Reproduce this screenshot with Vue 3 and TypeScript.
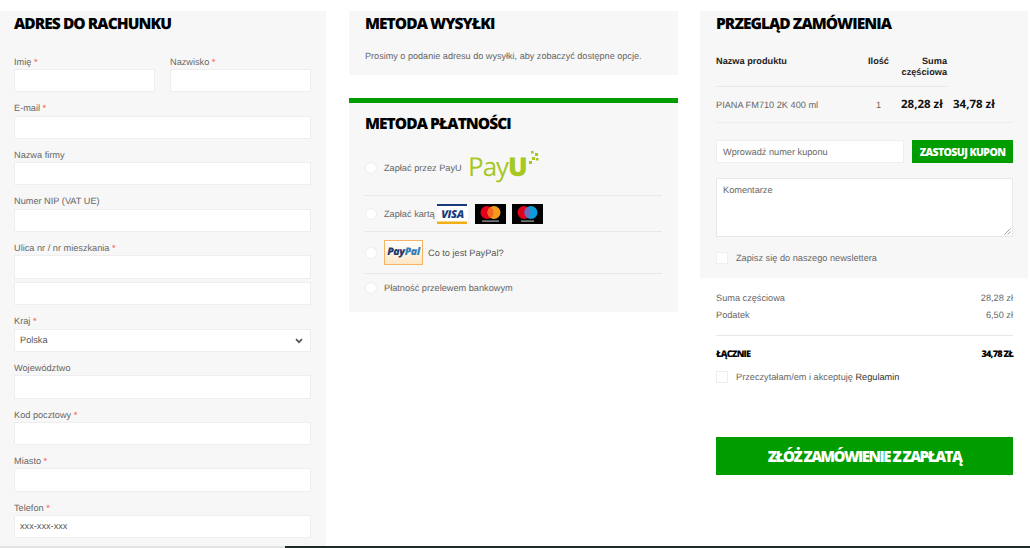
<script setup lang="ts">
interface Field {
  label: string
  required?: boolean
  half?: boolean
  value?: string
  select?: boolean
  noLabel?: boolean
}

const fields: Field[] = [
  { label: 'Imię', required: true, half: true },
  { label: 'Nazwisko', required: true, half: true },
  { label: 'E-mail', required: true },
  { label: 'Nazwa firmy' },
  { label: 'Numer NIP (VAT UE)' },
  { label: 'Ulica nr / nr mieszkania', required: true },
  { label: '', noLabel: true },
  { label: 'Kraj', required: true, value: 'Polska', select: true },
  { label: 'Województwo' },
  { label: 'Kod pocztowy', required: true },
  { label: 'Miasto', required: true },
  { label: 'Telefon', required: true, value: 'xxx-xxx-xxx' }
]
</script>

<template>
  <div class="page">
    <div class="columns">
      <section class="col col-address">
        <div class="panel panel-address">
          <h2 class="title">ADRES DO RACHUNKU</h2>
          <div class="form">
            <div
              v-for="field in fields"
              :key="field.label"
              class="field"
              :class="{ 'field--half': field.half, 'field--extra': field.noLabel }"
            >
              <label v-if="!field.noLabel" class="label">
                {{ field.label }}<span v-if="field.required" class="star"> *</span>
              </label>
              <div class="input" :class="{ 'input--select': field.select }">
                {{ field.value }}
                <svg v-if="field.select" class="chevron" width="8" height="6" viewBox="0 0 8 6" fill="none">
                  <path d="M1 1.2L4 4.2L7 1.2" stroke="#555" stroke-width="1.7" />
                </svg>
              </div>
            </div>
          </div>
        </div>
      </section>

      <section class="col col-methods">
        <div class="panel panel-shipping">
          <h2 class="title">METODA WYSYŁKI</h2>
          <p class="shipping-text">Prosimy o podanie adresu do wysyłki, aby zobaczyć dostępne opcje.</p>
        </div>

        <div class="panel panel-payment">
          <h2 class="title">METODA PŁATNOŚCI</h2>
          <div class="pay-row pay-row--payu">
            <span class="radio"></span>
            <span class="pay-label">Zapłać przez PayU</span>
            <svg class="payu" width="72" height="44" viewBox="0 -4 72 44">
              <text x="1" y="26" class="payu-light">Pay</text>
              <text x="41" y="26" class="payu-bold">U</text>
              <rect x="62" y="11" width="3" height="3" fill="#a5c822" />
              <rect x="65" y="7" width="3" height="3" fill="#a5c822" />
              <rect x="68" y="3" width="3" height="3" fill="#a5c822" />
              <rect x="64" y="1" width="2.5" height="2.5" fill="#a5c822" />
              <rect x="69" y="8" width="2.5" height="2.5" fill="#a5c822" />
            </svg>
          </div>
          <div class="pay-row pay-row--card">
            <span class="radio"></span>
            <span class="pay-label">Zapłać kartą</span>
            <div class="cards">
              <svg width="31" height="20" viewBox="0 0 31 20">
                <rect width="31" height="20" fill="#fff" />
                <rect width="30" height="2" fill="#1a3c7c" />
                <rect y="17.5" width="30" height="2.5" fill="#f2ae14" />
                <text x="15.5" y="14" class="visa-text" text-anchor="middle">VISA</text>
              </svg>
              <svg width="31" height="20" viewBox="0 0 31 20">
                <rect width="31" height="20" fill="#000" />
                <circle cx="12" cy="8.5" r="6.5" fill="#e3001b" />
                <circle cx="19" cy="8.5" r="6.5" fill="#f49b1c" />
                <path d="M15.5 3a6.5 6.5 0 0 1 0 11a6.5 6.5 0 0 1 0-11z" fill="#f2641f" />
                <rect x="7" y="16.5" width="17" height="1.2" fill="#aaa" />
              </svg>
              <svg width="31" height="20" viewBox="0 0 31 20">
                <rect width="31" height="20" fill="#000" />
                <circle cx="12" cy="8.5" r="6.5" fill="#e3001b" />
                <circle cx="19" cy="8.5" r="6.5" fill="#0a9cdc" />
                <path d="M15.5 3a6.5 6.5 0 0 1 0 11a6.5 6.5 0 0 1 0-11z" fill="#6c6bbd" />
                <rect x="9" y="16.5" width="13" height="1.2" fill="#aaa" />
              </svg>
            </div>
          </div>
          <div class="pay-row pay-row--paypal">
            <span class="radio"></span>
            <span class="paypal-badge"><span class="pp-dark">Pay</span><span class="pp-light">Pal</span></span>
            <span class="paypal-link">Co to jest PayPal?</span>
          </div>
          <div class="pay-row pay-row--bank">
            <span class="radio"></span>
            <span class="pay-label">Płatność przelewem bankowym</span>
          </div>
        </div>
      </section>

      <section class="col col-order">
        <div class="panel panel-order">
          <h2 class="title">PRZEGLĄD ZAMÓWIENIA</h2>
          <div class="order-table">
            <div class="th th-name">Nazwa produktu</div>
            <div class="th th-qty">Ilość</div>
            <div class="th th-sum">Suma częściowa</div>
            <div class="td td-name">PIANA FM710 2K 400 ml</div>
            <div class="td td-qty">1</div>
            <div class="td td-price">28,28 zł</div>
            <div class="td td-price td-total">34,78 zł</div>
          </div>
          <div class="coupon">
            <div class="input coupon-input">Wprowadź numer kuponu</div>
            <button class="coupon-btn">ZASTOSUJ KUPON</button>
          </div>
          <div class="textarea">
            Komentarze
            <svg class="grip" width="7" height="7" viewBox="0 0 7 7">
              <path d="M0.5 6.5L6.5 0.5M3.5 6.5L6.5 3.5" stroke="#888" stroke-width="0.8" />
            </svg>
          </div>
          <div class="check check--news">
            <span class="box"></span>
            <span>Zapisz się do naszego newslettera</span>
          </div>
        </div>

        <div class="summary">
          <div class="sum-row"><span>Suma częściowa</span><span>28,28 zł</span></div>
          <div class="sum-row"><span>Podatek</span><span>6,50 zł</span></div>
          <div class="sum-total"><span>ŁĄCZNIE</span><span>34,78 ZŁ</span></div>
          <div class="check">
            <span class="box"></span>
            <span>Przeczytałam/em i akceptuję <span class="terms">Regulamin</span></span>
          </div>
          <button class="submit">ZŁÓŻ ZAMÓWIENIE Z ZAPŁATĄ</button>
        </div>
      </section>
    </div>
    <div class="bottom-edge">
      <div class="edge-light"></div>
      <div class="edge-dark"></div>
    </div>
  </div>
</template>

<style>
html,
body {
  margin: 0;
  background: #fff;
  overflow: hidden;
}
</style>

<style scoped>
.page {
  width: 1030px;
  height: 548px;
  overflow: hidden;
  font-family: 'Liberation Sans', Arial, sans-serif;
  font-size: 9.2px;
  text-rendering: geometricPrecision;
  color: #666;
  display: flex;
  flex-direction: column;
}

.columns {
  flex: 1;
  min-height: 0;
  display: grid;
  grid-template-columns: 326px 329px 327px;
  column-gap: 23px;
  padding-top: 11px;
}

.col-order {
  margin-left: -1px;
}

.panel {
  background: #f7f7f7;
}

.title {
  margin: 0;
  font-family: 'Open Sans', sans-serif;
  font-weight: 800;
  font-size: 15.5px;
  line-height: 24px;
  letter-spacing: -0.95px;
  color: #000;
}

.panel-address {
  height: 535px;
  padding-left: 14px;
  box-sizing: border-box;
}

.form {
  width: 297px;
  margin-top: 10.7px;
  display: flex;
  flex-wrap: wrap;
  column-gap: 15px;
}

.field {
  width: 100%;
  height: 46.6px;
}

.field--half {
  width: 141px;
}

.field--extra {
  height: 23.3px;
  margin-top: 3.4px;
}

.label {
  display: block;
  height: 23.3px;
  box-sizing: border-box;
  padding-top: 9px;
  line-height: 14px;
}

.star {
  color: #f5604a;
}

.input {
  height: 23.3px;
  box-sizing: border-box;
  background: #fff;
  border: 1px solid #eee;
  padding: 0 5px;
  line-height: 21px;
  color: #555;
  position: relative;
}

.chevron {
  position: absolute;
  right: 7px;
  top: 8px;
}

.col-methods {
  display: flex;
  flex-direction: column;
}

.panel-shipping {
  height: 64px;
  padding: 0 16px;
}

.shipping-text {
  margin: 14px 0 0;
  line-height: 14px;
  font-size: 9.1px;
}

.panel-payment {
  margin-top: 23px;
  height: 214px;
  box-sizing: border-box;
  border-top: 5px solid #009c00;
  padding: 8px 16px 0 15px;
}

.panel-payment .title {
  height: 34px;
  margin-left: 1px;
}

.pay-row {
  display: flex;
  align-items: center;
  border-bottom: 1px solid #e8e8e8;
  box-sizing: border-box;
}

.pay-row--payu {
  height: 51px;
  padding-bottom: 5px;
}

.pay-row--card {
  height: 36px;
}

.pay-row--paypal {
  height: 42px;
}

.pay-row--bank {
  height: 27px;
  border-bottom: none;
}

.radio {
  width: 12px;
  height: 12px;
  margin-left: 1px;
  margin-right: 7px;
  border-radius: 50%;
  background: #fff;
  border: 1px solid #eee;
  box-sizing: border-box;
  flex: none;
}

.pay-label {
  white-space: nowrap;
}

.payu {
  margin-left: 5px;
  flex: none;
}

.payu-light {
  font-family: 'Open Sans', sans-serif;
  font-size: 26px;
  font-weight: 500;
  fill: #a5c822;
  letter-spacing: -1px;
}

.payu-bold {
  font-family: 'Open Sans', sans-serif;
  font-size: 26px;
  font-weight: 800;
  fill: #a5c822;
}

.cards {
  display: flex;
  gap: 6.5px;
  margin-left: 2.5px;
}

.cards svg {
  display: block;
}

.visa-text {
  font-family: 'Open Sans', sans-serif;
  font-weight: 800;
  font-style: italic;
  font-size: 11px;
  letter-spacing: -0.4px;
  fill: #1a3c7c;
}

.paypal-badge {
  width: 39px;
  height: 25px;
  box-sizing: border-box;
  border: 1px solid #f5b565;
  background: linear-gradient(#fff, #fde6c8);
  font-family: 'Open Sans', sans-serif;
  font-weight: 800;
  font-style: italic;
  font-size: 10.5px;
  letter-spacing: -0.4px;
  line-height: 23px;
  text-align: center;
  flex: none;
}

.pp-dark {
  color: #1f3b70;
}

.pp-light {
  color: #2f7fb8;
}

.paypal-link {
  margin-left: 5px;
  color: #555;
}

.panel-order {
  height: 267px;
  padding: 0 15px 0 16px;
  box-sizing: border-box;
}

.order-table {
  margin-top: 15px;
  width: 297px;
  display: grid;
  grid-template-columns: 146px 33px 52px 66px;
}

.th {
  height: 37px;
  border-bottom: 1px solid #e8e8e8;
  box-sizing: border-box;
  font-weight: bold;
  color: #222;
  line-height: 11px;
  padding-top: 6px;
}

.th-qty {
  text-align: center;
}

.th-sum {
  grid-column: 3;
  text-align: right;
  margin-left: -16px;
}

.td {
  height: 36px;
  display: flex;
  align-items: center;
  border-bottom: 1px solid #eee;
  box-sizing: border-box;
  white-space: nowrap;
}

.td-name {
  grid-column: 1;
}

.td-qty {
  justify-content: center;
}

.td-price {
  font-family: 'Open Sans', sans-serif;
  font-weight: 700;
  font-size: 11.5px;
  color: #111;
  padding-left: 6px;
}

.coupon {
  display: flex;
  justify-content: space-between;
  margin-top: 17px;
  width: 297px;
}

.coupon-input {
  width: 188px;
  height: 22.5px;
  padding: 0 6px;
  line-height: 22px;
  color: #666;
}

.coupon-btn {
  width: 101px;
  height: 23px;
  padding: 0;
  border: 0;
  background: #009c00;
  color: #fff;
  font-family: 'Open Sans', sans-serif;
  font-weight: 800;
  font-size: 10.5px;
  letter-spacing: -0.6px;
}

.textarea {
  position: relative;
  margin-top: 15px;
  width: 297px;
  height: 59px;
  background: #fff;
  border: 1px solid #e8e8e8;
  box-sizing: border-box;
  padding: 5px 6px;
  line-height: 12px;
}

.grip {
  position: absolute;
  right: 1px;
  bottom: 1px;
}

.check {
  display: flex;
  align-items: center;
  gap: 8px;
}

.check--news {
  margin-top: 15px;
}

.box {
  width: 12px;
  height: 12px;
  background: #fff;
  border: 1px solid #eee;
  box-sizing: border-box;
  flex: none;
}

.summary {
  padding: 0 15px 0 16px;
  width: 297px;
  box-sizing: content-box;
}

.sum-row {
  display: flex;
  justify-content: space-between;
  line-height: 14px;
  height: 17px;
}

.sum-row:first-child {
  margin-top: 13px;
}

.sum-total {
  display: flex;
  justify-content: space-between;
  margin-top: 10px;
  padding-top: 11px;
  border-top: 1px solid #e8e8e8;
  font-family: 'Open Sans', sans-serif;
  font-weight: 800;
  font-size: 9.2px;
  letter-spacing: -0.8px;
  line-height: 14px;
  color: #000;
}

.summary .check {
  margin-top: 10px;
}

.terms {
  color: #333;
}

.submit {
  display: block;
  width: 297px;
  height: 38px;
  margin-top: 54px;
  padding: 0;
  border: 0;
  background: #009c00;
  color: #fff;
  font-family: 'Open Sans', sans-serif;
  font-weight: 800;
  font-size: 15px;
  letter-spacing: -1.5px;
}

.bottom-edge {
  height: 2px;
  display: flex;
  flex: none;
}

.edge-light {
  width: 285px;
  background: #e4e4e4;
}

.edge-dark {
  flex: 1;
  background: #1d2a2a;
}
</style>
